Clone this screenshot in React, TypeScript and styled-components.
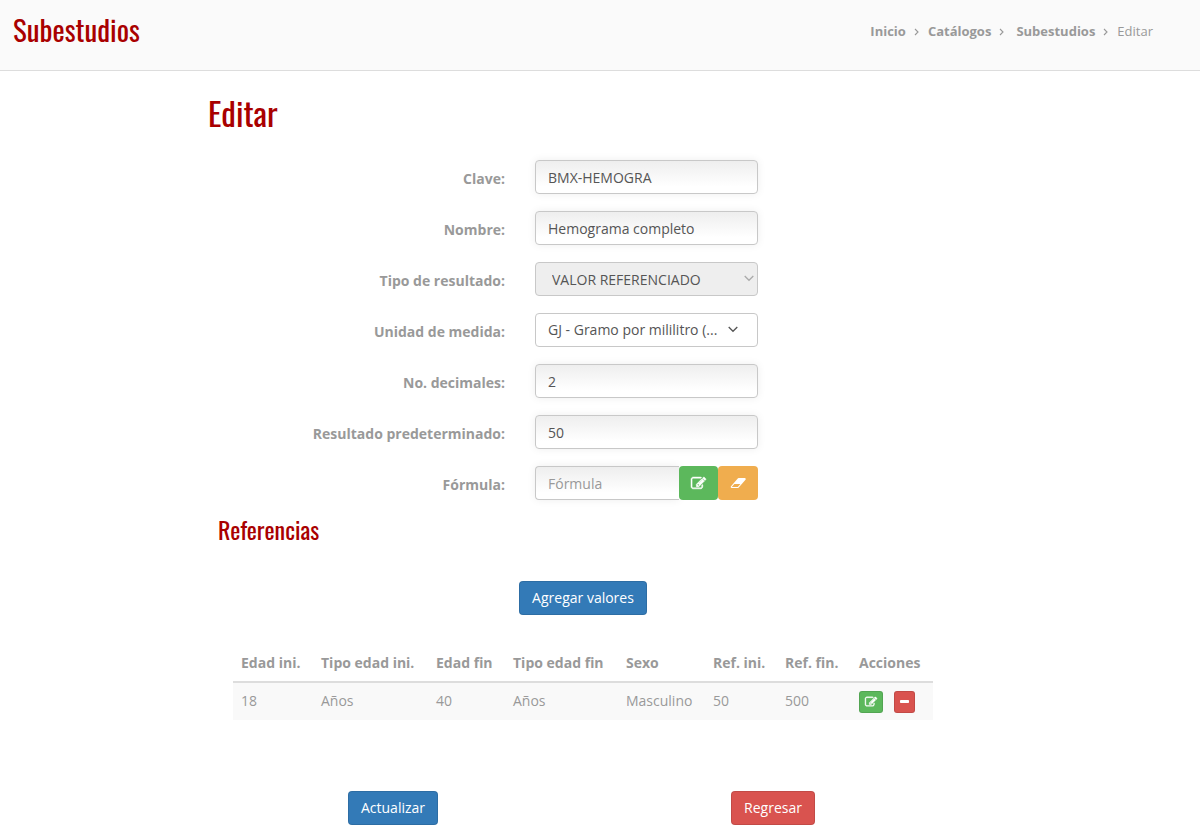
import React from "react";
import styled, { createGlobalStyle, css } from "styled-components";

const colors = {
  brand: "#a90000",
  text: "#999999",
  input: "#555555",
  border: "#c8c8c8",
  blue: "#337ab7",
  green: "#5cb85c",
  orange: "#f0ad4e",
  red: "#d9534f",
};

const GlobalStyle = createGlobalStyle`
  *, *::before, *::after { box-sizing: border-box; }
  body {
    margin: 0;
    background: #ffffff;
    color: ${colors.text};
    font-family: "Open Sans", "Noto Sans", sans-serif;
    font-size: 14px;
    line-height: 20px;
  }
  button, input, select { font: inherit; }
`;

const heading = css`
  margin: 0;
  color: ${colors.brand};
  font-family: Oswald, "Liberation Sans Narrow", "Liberation Sans", sans-serif;
  font-weight: 400;
`;

const Header = styled.header`
  display: flex;
  justify-content: space-between;
  align-items: flex-start;
  min-height: 71px;
  padding: 11px 47px 0 13px;
  background: #fafafa;
  border-bottom: 1px solid #dddddd;
`;

const PageTitle = styled.h1`
  ${heading}
  font-size: 29px;
  line-height: 36px;
`;

const Trail = styled.ol`
  display: flex;
  align-items: center;
  margin: 0;
  padding: 10px 0 0;
  list-style: none;
  font-size: 13px;
`;

const Crumb = styled.li<{ $spaced?: boolean }>`
  display: flex;
  align-items: center;
  padding-right: ${(p) => (p.$spaced ? 3 : 0)}px;

  svg { margin: 2px 8px 0; }
`;

const CrumbLink = styled.a`
  color: inherit;
  font-weight: 700;
  text-decoration: none;
`;

const Main = styled.main`
  width: 66.6667%;
  margin: 0 auto;
  padding: 22px 0 8px;
`;

const FormTitle = styled.h2`
  ${heading}
  padding-left: 8px;
  font-size: 33px;
  line-height: 40px;
`;

const Fields = styled.div`
  display: grid;
  gap: 17px;
  margin-top: 27px;
`;

const FieldRow = styled.div`
  display: grid;
  grid-template-columns: 305fr 223fr 212fr;
  column-gap: 30px;
`;

const Label = styled.label`
  padding-top: 9px;
  font-weight: 700;
  line-height: 20px;
  text-align: right;
`;

const control = css`
  width: 100%;
  min-width: 0;
  height: 34px;
  padding: 6px 12px;
  border: 1px solid ${colors.border};
  border-radius: 4px;
  color: ${colors.input};
  outline: none;
`;

const TextInput = styled.input<{ $joined?: boolean }>`
  ${control}
  background: linear-gradient(#eeeeee, #ffffff 80%);
  box-shadow: 0 0 8px #eeeeee;
  ${(p) => p.$joined && "flex: 1; border-right: 0; border-radius: 4px 0 0 4px;"}

  &::placeholder { color: #999999; opacity: 1; }
`;

const SelectBox = styled.div<{ $end: number }>`
  position: relative;

  svg {
    position: absolute;
    top: 13px;
    right: ${(p) => p.$end}px;
    pointer-events: none;
  }
`;

const Select = styled.select<{ $plain?: boolean }>`
  ${control}
  appearance: none;
  padding: ${(p) => (p.$plain ? "6px 36px 6px 12px" : "7px 24px 5px 16px")};
  background: ${(p) => (p.$plain ? "#ffffff" : "#eeeeee")};
  text-overflow: ellipsis;
  line-height: 20px;
  opacity: 1;
`;

const InputGroup = styled.div`
  display: flex;
`;

const Button = styled.button<{ $tone: "blue" | "green" | "orange" | "red" }>`
  display: inline-flex;
  align-items: center;
  justify-content: center;
  height: 34px;
  padding: 0 12px;
  border: 1px solid rgba(0, 0, 0, 0.1);
  border-radius: 4px;
  background: ${(p) => colors[p.$tone]};
  color: #ffffff;
  cursor: pointer;
`;

const GroupButton = styled(Button)`
  flex: none;
  padding: 0 11px;
  border-color: transparent;
`;

const SmallButton = styled(Button)`
  height: 22px;
  padding: 0 5px;
  border-radius: 3px;
`;

const Section = styled.section`
  padding: 0 37px 0 3px;
`;

const SectionTitle = styled.h3`
  ${heading}
  margin-top: 11px;
  padding-left: 15px;
  font-size: 24px;
  line-height: 36px;
`;

const Centered = styled.div`
  display: flex;
  justify-content: center;
  margin-top: 34px;
`;

const TableWrap = styled.div`
  margin: 30px 30px 0;
`;

const Table = styled.table`
  width: 100%;
  table-layout: fixed;
  border-collapse: separate;
  border-spacing: 0;
  white-space: nowrap;
`;

const Th = styled.th`
  padding: 8px;
  border-bottom: 2px solid #dddddd;
  text-align: left;
`;

const Td = styled.td`
  height: 37px;
  padding: 8px;
  background: #f9f9f9;
  line-height: 20px;
  vertical-align: top;
`;

const Actions = styled.div`
  display: flex;
  gap: 11px;
  height: 21px;
`;

const Footer = styled.div`
  display: grid;
  grid-template-columns: 1fr 1fr;
  justify-items: center;
  margin-top: 71px;
`;

const Chevron = ({ stroke = colors.input }: { stroke?: string }) => (
  <svg width="10" height="7" viewBox="0 0 10 7" fill="none" stroke={stroke} strokeWidth="1.3" aria-hidden="true">
    <path d="M0.7 1 5 5.3 9.3 1" />
  </svg>
);

const Separator = () => (
  <svg width="6" height="8" viewBox="0 0 6 8" fill="none" stroke={colors.text} strokeWidth="1.1" aria-hidden="true">
    <path d="M1 1 4 4 1 7" />
  </svg>
);

const EditIcon = ({ size = 15 }: { size?: number }) => (
  <svg width={size} height={size} viewBox="0 0 1792 1792" fill="currentColor" stroke="currentColor" strokeWidth="60" overflow="visible" aria-hidden="true">
    <path d="M888 1184l116-116-152-152-116 116v56h96v96h56zm440-720q-16-16-33 1l-350 350q-17 17-1 33t33-1l350-350q17-17 1-33zm80 594v190q0 119-84.500 203.500t-203.500 84.500h-832q-119 0-203.500-84.500t-84.500-203.500v-832q0-119 84.500-203.500t203.500-84.500h832q63 0 117 25 15 7 18 23 3 17-9 29l-49 49q-14 14-32 8-23-6-45-6h-832q-66 0-113 47t-47 113v832q0 66 47 113t113 47h832q66 0 113-47t47-113v-126q0-13 9-22l64-64q15-15 35-7t20 29zm-96-738l288 288-672 672h-288v-288zm444 132l-92 92-288-288 92-92q28-28 68-28t68 28l152 152q28 28 28 68t-28 68z" />
  </svg>
);

const EraserIcon = () => (
  <svg width="16" height="14" viewBox="0 0 1984 1792" fill="currentColor" aria-hidden="true">
    <path d="M960 1408l336-384h-768l-336 384h768zm1013-1077q15 34 9.500 71.500t-30.500 65.500l-896 1024q-38 44-96 44h-768q-38 0-69.500-20.500t-47.500-54.500q-15-34-9.500-71.500t30.500-65.500l896-1024q38-44 96-44h768q38 0 69.500 20.500t47.500 54.500z" />
  </svg>
);

const MinusIcon = () => (
  <svg width="9" height="12" viewBox="0 0 9 12" fill="currentColor" aria-hidden="true">
    <rect y="4" width="9" height="3" rx="0.8" />
  </svg>
);

const columns = [
  { title: "Edad ini.", width: 80 },
  { title: "Tipo edad ini.", width: 115 },
  { title: "Edad fin", width: 77 },
  { title: "Tipo edad fin", width: 113 },
  { title: "Sexo", width: 87 },
  { title: "Ref. ini.", width: 72 },
  { title: "Ref. fin.", width: 74 },
  { title: "Acciones", width: 82 },
];

const Col = styled.col<{ $width: number }>`
  width: ${(p) => p.$width}px;
`;

const rows = [["18", "Años", "40", "Años", "Masculino", "50", "500"]];

const crumbs = [
  { name: "Inicio" },
  { name: "Catálogos", spaced: true },
  { name: "Subestudios" },
];

const TextField = ({ id, label, value }: { id: string; label: string; value: string }) => (
  <FieldRow>
    <Label htmlFor={id}>{label}</Label>
    <TextInput id={id} type="text" defaultValue={value} />
  </FieldRow>
);

export default function App() {
  return (
    <>
      <GlobalStyle />
      <Header>
        <PageTitle>Subestudios</PageTitle>
        <nav aria-label="Ruta">
          <Trail>
            {crumbs.map((c) => (
              <Crumb key={c.name} $spaced={c.spaced}>
                <CrumbLink href="#">{c.name}</CrumbLink>
                <Separator />
              </Crumb>
            ))}
            <Crumb aria-current="page">Editar</Crumb>
          </Trail>
        </nav>
      </Header>
      <Main>
        <FormTitle>Editar</FormTitle>
        <Fields>
          <TextField id="clave" label="Clave:" value="BMX-HEMOGRA" />
          <TextField id="nombre" label="Nombre:" value="Hemograma completo" />
          <FieldRow>
            <Label htmlFor="tipo">Tipo de resultado:</Label>
            <SelectBox $end={4}>
              <Select id="tipo" disabled>
                <option>VALOR REFERENCIADO</option>
              </Select>
              <Chevron stroke="#aaaaaa" />
            </SelectBox>
          </FieldRow>
          <FieldRow>
            <Label htmlFor="unidad">Unidad de medida:</Label>
            <SelectBox $end={20}>
              <Select id="unidad" $plain>
                <option>GJ - Gramo por mililitro (...</option>
              </Select>
              <Chevron />
            </SelectBox>
          </FieldRow>
          <TextField id="decimales" label="No. decimales:" value="2" />
          <TextField id="resultado" label="Resultado predeterminado:" value="50" />
          <FieldRow>
            <Label htmlFor="formula">Fórmula:</Label>
            <InputGroup>
              <TextInput id="formula" type="text" placeholder="Fórmula" $joined />
              <GroupButton type="button" $tone="green" aria-label="Editar fórmula">
                <EditIcon />
              </GroupButton>
              <GroupButton type="button" $tone="orange" aria-label="Borrar fórmula">
                <EraserIcon />
              </GroupButton>
            </InputGroup>
          </FieldRow>
        </Fields>
        <Section>
          <SectionTitle>Referencias</SectionTitle>
          <Centered>
            <Button type="button" $tone="blue">Agregar valores</Button>
          </Centered>
          <TableWrap>
            <Table>
              <colgroup>
                {columns.map((c) => (
                  <Col key={c.title} $width={c.width} />
                ))}
              </colgroup>
              <thead>
                <tr>
                  {columns.map((c) => (
                    <Th key={c.title} scope="col">{c.title}</Th>
                  ))}
                </tr>
              </thead>
              <tbody>
                {rows.map((cells, r) => (
                  <tr key={r}>
                    {cells.map((cell, i) => (
                      <Td key={i}>{cell}</Td>
                    ))}
                    <Td>
                      <Actions>
                        <SmallButton type="button" $tone="green" aria-label="Editar valor">
                          <EditIcon size={12} />
                        </SmallButton>
                        <SmallButton type="button" $tone="red" aria-label="Eliminar valor">
                          <MinusIcon />
                        </SmallButton>
                      </Actions>
                    </Td>
                  </tr>
                ))}
              </tbody>
            </Table>
          </TableWrap>
          <Footer>
            <Button type="submit" $tone="blue">Actualizar</Button>
            <Button type="button" $tone="red">Regresar</Button>
          </Footer>
        </Section>
      </Main>
    </>
  );
}
